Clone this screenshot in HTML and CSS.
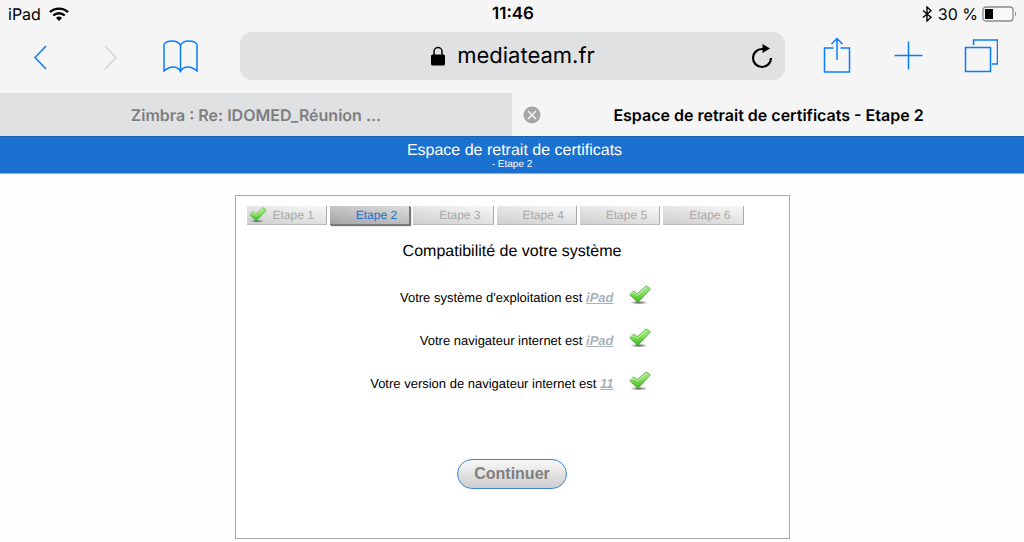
FILE: index.html
```html
<!DOCTYPE html>
<html lang="fr">
<head>
    <meta charset="UTF-8">
    <meta name="viewport" content="width=device-width, initial-scale=1.0">
    <title>Espace de retrait de certificats - Etape 2</title>
    <link rel="stylesheet" href="styles.css">
</head>
<body>
    <!-- shared check mark -->
    <svg class="sprite" width="0" height="0" aria-hidden="true">
        <defs>
            <linearGradient id="check-fill" x1="0" y1="0" x2="0" y2="1">
                <stop offset="0" stop-color="#a5ec90"/>
                <stop offset="0.45" stop-color="#8be05c"/>
                <stop offset="1" stop-color="#34b61c"/>
            </linearGradient>
            <radialGradient id="check-shadow">
                <stop offset="0" stop-color="#333" stop-opacity="0.8"/>
                <stop offset="1" stop-color="#333" stop-opacity="0"/>
            </radialGradient>
        </defs>
        <symbol id="check" viewBox="0 0 22 20">
            <ellipse cx="10" cy="17.6" rx="9" ry="2" fill="url(#check-shadow)"/>
            <path d="M.8 9.8 4.6 6 8.3 8.700 17.200.9 21.400 3.900 8.800 17.500Z" fill="url(#check-fill)" stroke="#3fa83a" stroke-width="0.8" stroke-linejoin="round"/>
            <path d="M2.400 9.400 4.700 7.200 8.400 10 17.300 2.200" fill="none" stroke="#d8f8cf" stroke-width="0.8"/>
        </symbol>
    </svg>

    <div class="browser">
        <div class="status-bar">
            <div class="status-left">
                <span>iPad</span>
                <svg width="20" height="14" viewBox="0 0 20 14" fill="none" stroke="#000" stroke-width="2.4">
                    <path d="M1 5.2a13 13 0 0 1 18 0M4.3 8.5a8.2 8.2 0 0 1 11.4 0"/>
                    <path d="M7 11a4.4 4.4 0 0 1 6 0L10 14Z" fill="#000" stroke="none"/>
                </svg>
            </div>
            <div class="status-time">11:46</div>
            <div class="status-right">
                <svg width="10" height="16" viewBox="0 0 10 16" fill="none" stroke="#000" stroke-width="1.4">
                    <path d="M1 4.5 9 11.3 5 15V1L9 4.7 1 11.5"/>
                </svg>
                <span>30 %</span>
                <svg width="36" height="16" viewBox="0 0 36 16">
                    <rect x="1" y="1" width="30" height="14" rx="3" fill="#fff" fill-opacity="0.4" stroke="#8b8b8b" stroke-width="1.3"/>
                    <rect x="3" y="3" width="8" height="10" fill="#000"/>
                    <path d="M33 5.5q2.5 2.5 0 5Z" fill="#8b8b8b"/>
                </svg>
            </div>
        </div>

        <div class="toolbar">
            <div class="tools tools-left">
                <button class="tool" aria-label="Précédent">
                    <svg width="16" height="28" viewBox="0 0 16 28"><path d="M14 4 3 15.500 14 27" stroke-width="2"/></svg>
                </button>
                <button class="tool" aria-label="Suivant" disabled>
                    <svg width="16" height="28" viewBox="0 0 16 28"><path d="M3 4 14 15.500 3 27" stroke-width="2"/></svg>
                </button>
                <button class="tool" aria-label="Signets">
                    <svg width="36" height="34" viewBox="0 0 36 34"><path d="M18.500 6.500C17 3 14 2 10 2S3.100 3.500 2 5.500V32C5 29.500 7.500 28 11 28S17 29.500 18.500 32.500C20 29.500 22.500 28 26 28S32 29.500 35 32V5.500C33.900 3.500 31 2 27 2S20 3 18.500 6.500V32"/></svg>
                </button>
            </div>
            <div class="address-bar">
                <span class="address">
                    <svg width="16" height="20" viewBox="0 0 16 20">
                        <path d="M4 9V5.500a4 4 0 0 1 8 0V9" fill="none" stroke="#000" stroke-width="1.500"/>
                        <rect x="1" y="8.500" width="14" height="11" rx="1.500" fill="#000"/>
                    </svg>
                    mediateam.fr
                </span>
                <button class="reload" aria-label="Recharger">
                    <svg width="22" height="26" viewBox="0 0 22 26">
                        <path d="M20 15A9 9 0 1 1 11 6H14" fill="none" stroke="#000" stroke-width="2.200"/>
                        <path d="M11.500 1 19 5.500 11.500 10Z" fill="#000"/>
                    </svg>
                </button>
            </div>
            <div class="tools tools-right">
                <button class="tool" aria-label="Partager">
                    <svg width="28" height="38" viewBox="0 0 28 38"><path d="M10.500 11H1.500V35H26.500V11H17.500M14 23V1.500M8.500 7 14 1.500 19.500 7"/></svg>
                </button>
                <button class="tool" aria-label="Nouvel onglet">
                    <svg width="30" height="30" viewBox="0 0 30 30"><path d="M14.500.500V28.500M.500 14.500H28.500"/></svg>
                </button>
                <button class="tool" aria-label="Onglets">
                    <svg width="34" height="34" viewBox="0 0 34 34"><path d="M1.500 8.500H26.500V32.500H1.500ZM9.500 6V1H33.500V25H28"/></svg>
                </button>
            </div>
        </div>

        <div class="tabs">
            <a class="tab" href="#zimbra">Zimbra : Re: IDOMED_Réunion ...</a>
            <div class="tab tab-active">
                <button class="tab-close" aria-label="Fermer l'onglet">
                    <svg width="18" height="18" viewBox="0 0 18 18">
                        <circle cx="9" cy="9" r="8.500" fill="#a6a6a6"/>
                        <path d="M5 5 13 13M13 5 5 13" stroke="#f5f5f5" stroke-width="1.500"/>
                    </svg>
                </button>
                <a href="#etape2">Espace de retrait de certificats - Etape 2</a>
            </div>
        </div>
    </div>

    <header class="page-header">
        <h1>Espace de retrait de certificats</h1>
        <p>- Etape 2</p>
    </header>

    <main class="panel">
        <ol class="steps">
            <li class="step"><svg class="step-check" width="18" height="16"><use href="#check"/></svg>Etape 1</li>
            <li class="step step-active">Etape 2</li>
            <li class="step">Etape 3</li>
            <li class="step">Etape 4</li>
            <li class="step">Etape 5</li>
            <li class="step">Etape 6</li>
        </ol>

        <h2>Compatibilité de votre système</h2>

        <ul class="checks">
            <li>
                <span>Votre système d'exploitation est <em>iPad</em></span>
                <svg width="22" height="20"><use href="#check"/></svg>
            </li>
            <li>
                <span>Votre navigateur internet est <em>iPad</em></span>
                <svg width="22" height="20"><use href="#check"/></svg>
            </li>
            <li>
                <span>Votre version de navigateur internet est <em>11</em></span>
                <svg width="22" height="20"><use href="#check"/></svg>
            </li>
        </ul>

        <button class="btn">Continuer</button>
    </main>
</body>
</html>
```
FILE: styles.css
```css
* {
    box-sizing: border-box;
}

body {
    margin: 0;
    font-family: "Liberation Sans", Arial, sans-serif;
    background-color: #fefefe;
    color: #000;
    text-rendering: geometricPrecision;
}

button {
    padding: 0;
    border: none;
    background: none;
    cursor: pointer;
}

svg {
    display: block;
    flex: none;
}

.sprite {
    position: absolute;
}

/* Browser bars */
.browser {
    font-family: Inter, "Liberation Sans", sans-serif;
    background-color: #f5f5f5;
}

.status-bar {
    display: grid;
    grid-template-columns: 1fr auto 1fr;
    height: 28px;
    padding: 0 6px 0 8px;
    align-items: center;
    font-size: 16px;
}

.status-left,
.status-right {
    display: flex;
    align-items: center;
    gap: 8px;
}

.status-right {
    justify-content: flex-end;
    gap: 4px;
}

.status-right span {
    margin-left: 2px;
}

.status-time {
    font-size: 17px;
    font-weight: 600;
}

.toolbar {
    display: grid;
    grid-template-columns: 240px 1fr 239px;
    height: 65px;
    padding-bottom: 9px;
    align-items: center;
}

.tools {
    display: flex;
}

.tools-left {
    padding-left: 5px;
}

.tools-right {
    padding-left: 16px;
}

.tool {
    display: flex;
    flex: 0 0 70px;
    height: 48px;
    align-items: center;
    justify-content: center;
}

.tools-right .tool {
    flex-basis: 72px;
}

.tool path {
    fill: none;
    stroke: #0a7cff;
    stroke-width: 1.5;
}

.tool:disabled path {
    stroke: #d5d5d7;
}

.address-bar {
    display: flex;
    height: 48px;
    padding: 0 12px 0 34px;
    align-items: center;
    background-color: #e0e1e3;
    border-radius: 12px;
}

.address {
    display: flex;
    flex: 1;
    align-items: center;
    justify-content: center;
    gap: 11px;
    font-size: 22px;
}

.tabs {
    display: grid;
    grid-template-columns: 1fr 1fr;
    height: 44px;
    border-bottom: 1px solid #1b62ae;
    font-size: 16px;
    font-weight: 600;
}

.tab {
    display: flex;
    align-items: center;
    justify-content: center;
    background-color: #e0e1e3;
    color: #7d7e80;
    text-decoration: none;
}

.tab-active {
    padding: 0 28px 0 11px;
    background-color: #f5f5f5;
}

.tab-active a {
    flex: 1;
    color: #000;
    text-align: center;
    text-decoration: none;
}

/* Page */
.page-header {
    height: 37px;
    padding: 5px 0 0 5px;
    background-color: #1b71d0;
    border-bottom: 1px solid #84b3e8;
    color: #fff;
    text-align: center;
}

.page-header h1 {
    margin: 0;
    font-size: 16px;
    font-weight: normal;
    line-height: 18px;
}

.page-header p {
    margin: 0;
    padding-right: 5px;
    font-size: 10px;
    line-height: 10px;
}

.panel {
    max-width: 555px;
    min-height: 344px;
    margin: 21px auto 0;
    padding: 10px 11px;
    border: 1px solid #aaa;
    background-color: #fff;
}

.steps {
    display: grid;
    grid-template-columns: repeat(6, 1fr);
    gap: 3px;
    margin: 0 34px 0 0;
    padding: 0;
    list-style: none;
}

.step {
    display: flex;
    height: 19px;
    padding-right: 12px;
    align-items: center;
    justify-content: flex-end;
    background: linear-gradient(10deg, #cecece, #f8f8f8);
    border-right: 1px solid #aaa;
    border-bottom: 1px solid #bbb;
    color: #aaa;
    font-size: 12px;
}

.step-check {
    margin-right: auto;
    margin-left: 2px;
}

.step-active {
    background: linear-gradient(10deg, #a4a4a4, #dedede);
    border-color: #777;
    box-shadow: 1px 1px 1px #777;
    color: #1b71d0;
}

.panel h2 {
    margin: 17px 0 0;
    font-size: 16px;
    font-weight: normal;
    line-height: 20px;
    text-align: center;
}

.checks {
    display: grid;
    gap: 23px;
    margin: 23px 0 0;
    padding: 0 127px 0 0;
    list-style: none;
}

.checks li {
    display: flex;
    height: 20px;
    justify-content: flex-end;
    gap: 15px;
    font-size: 13px;
    line-height: 26px;
}

.checks em {
    color: #a6b2b9;
    font-weight: bold;
    text-decoration: underline;
}

.btn {
    display: block;
    height: 30px;
    margin: 68px auto 0;
    padding: 0 16px;
    border: 1px solid #3c86d8;
    border-radius: 15px;
    background: linear-gradient(#f8f8f8, #cdcdcd);
    color: #808080;
    font-family: inherit;
    font-size: 16px;
    font-weight: bold;
}

.btn:hover {
    background: #e6e6e6;
}
```
